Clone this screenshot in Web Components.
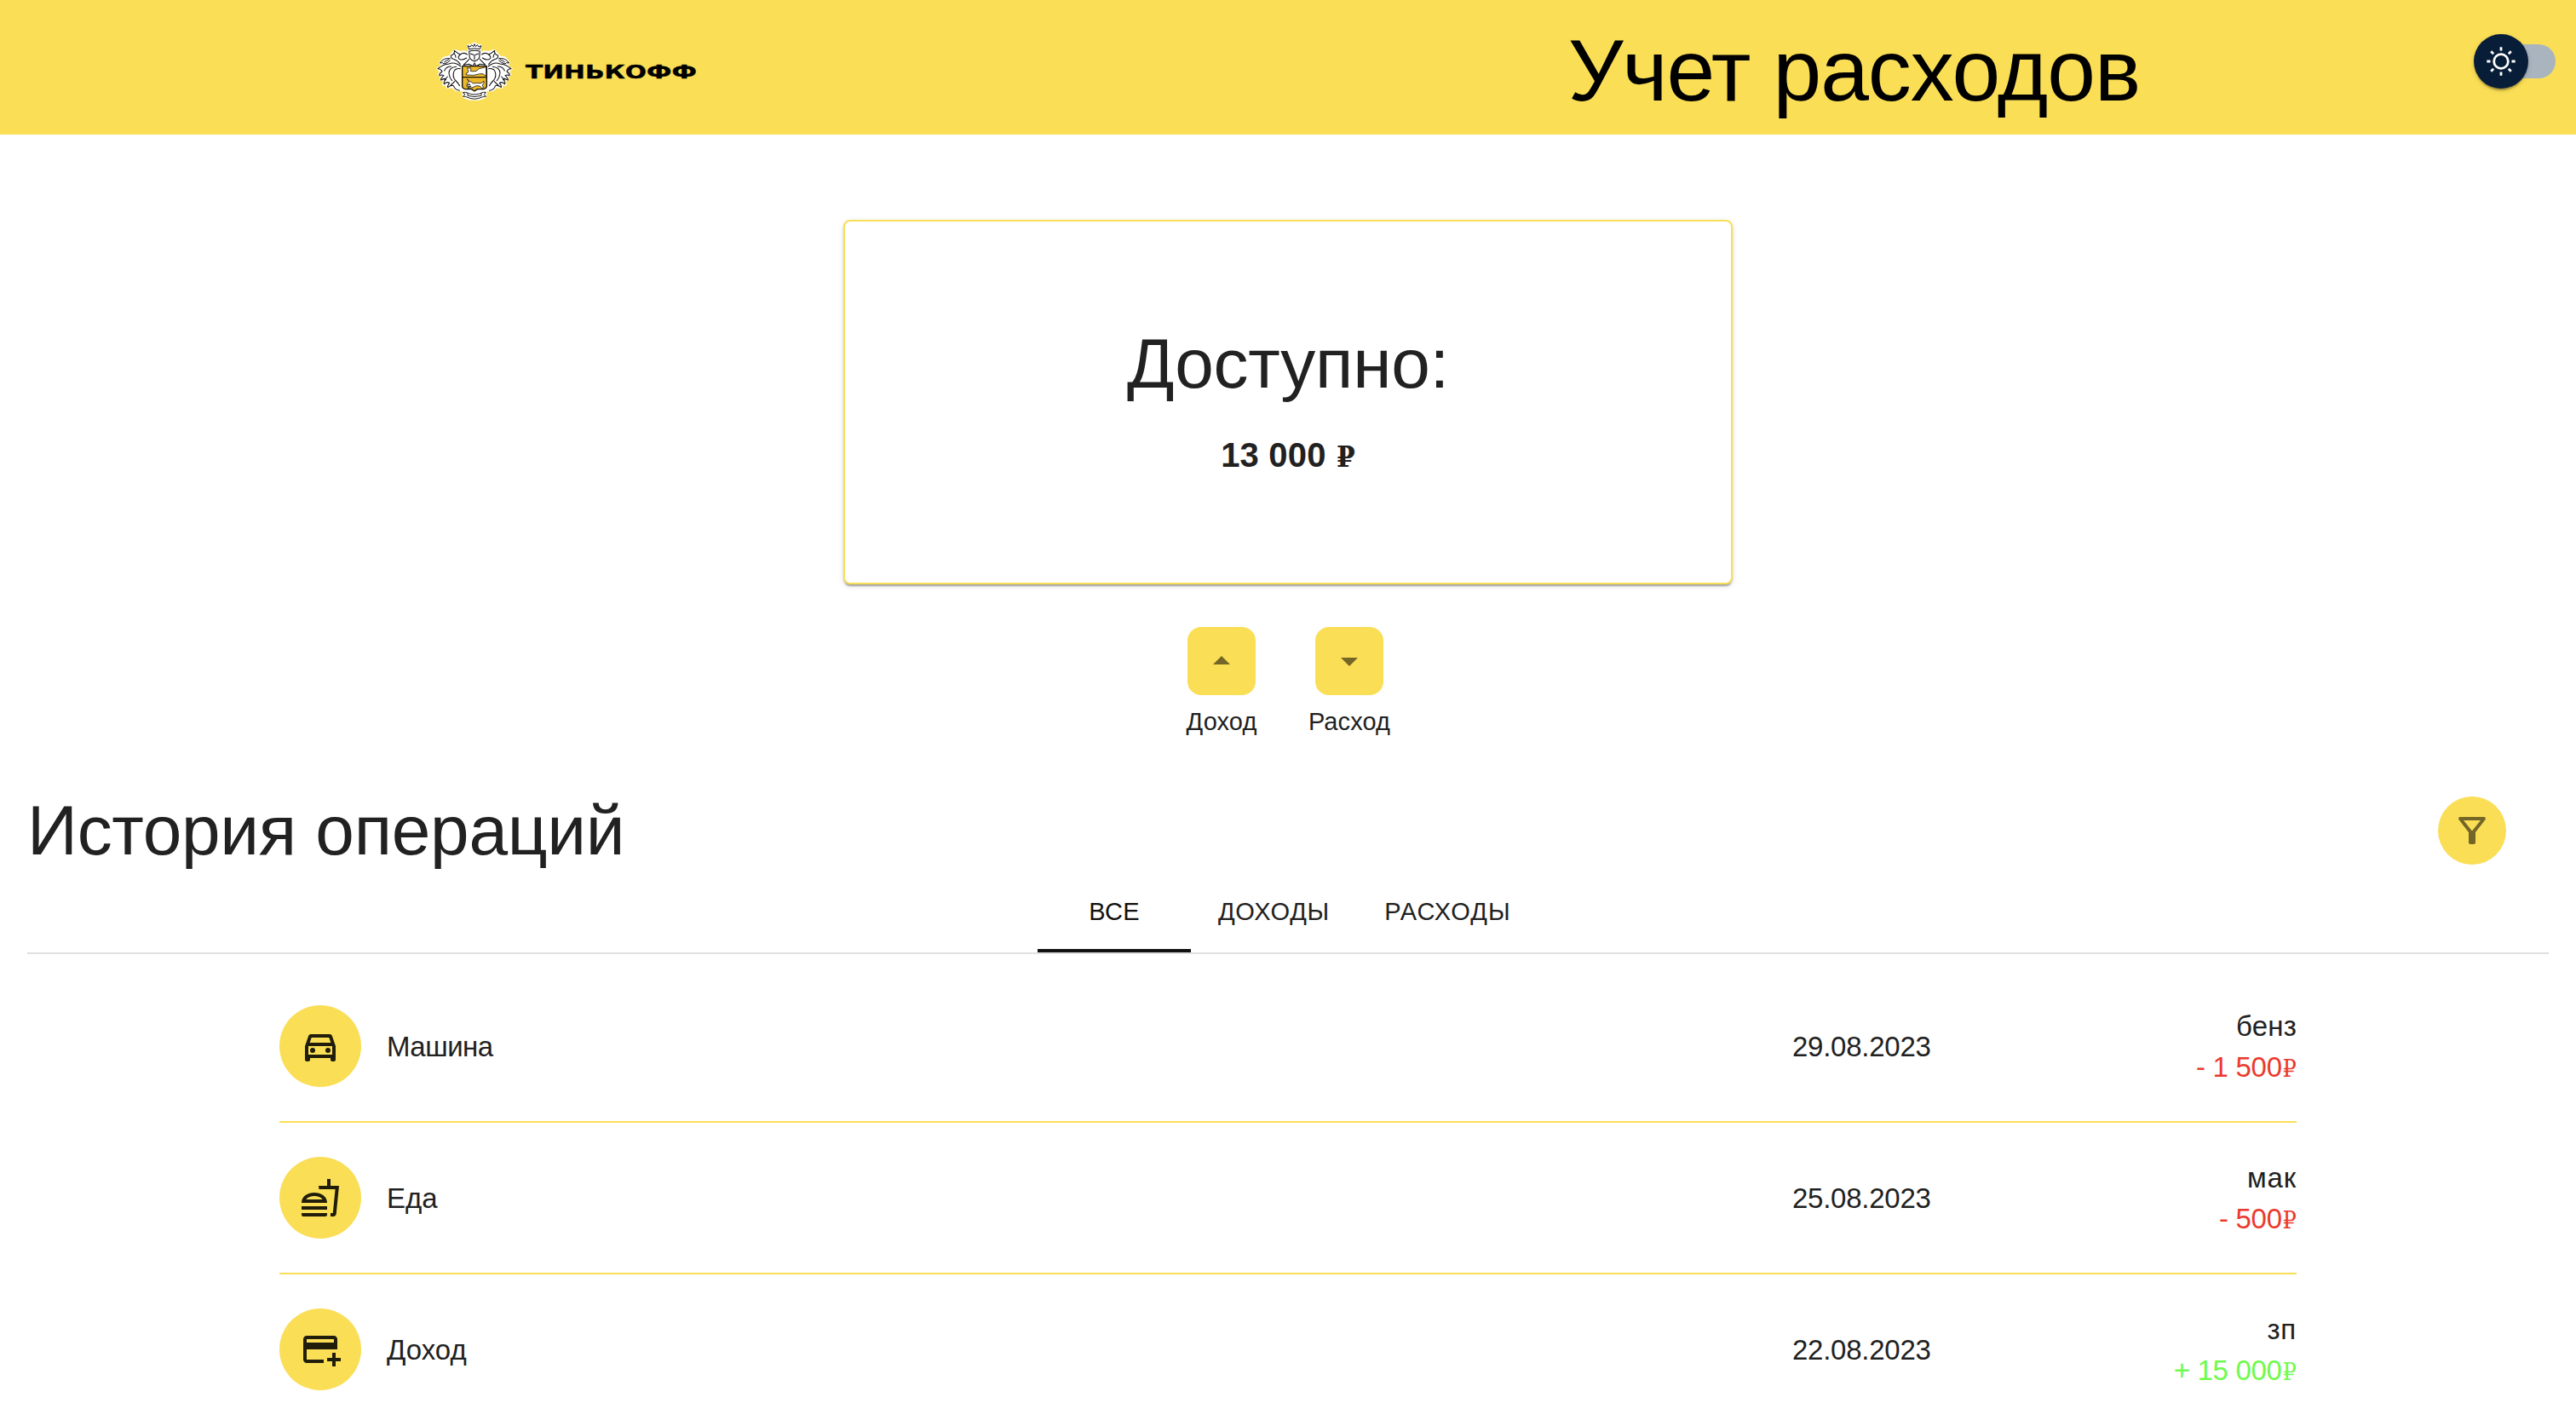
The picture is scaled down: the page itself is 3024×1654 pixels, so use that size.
<!DOCTYPE html>
<html lang="ru">
<head>
<meta charset="utf-8">
<title>Учет расходов</title>
<style>
  html, body { margin: 0; }
  body {
    --brand: #fade56;
    --text: #212121;
    background: #fff;
    color: var(--text);
    font-family: "Liberation Sans", Arial, sans-serif;
    overflow: hidden;
    height: 1654px;
  }
</style>
</head>
<body>
<expense-app></expense-app>
<script>
const define = (name, markup, setup) => {
  const template = document.createElement('template');
  template.innerHTML = markup;
  customElements.define(name, class extends HTMLElement {
    connectedCallback() {
      if (this.shadowRoot) return;
      const root = this.attachShadow({ mode: 'open' });
      root.append(template.content.cloneNode(true));
      if (setup) setup(this, root);
    }
  });
};

const ICONS = {
  up: '<path d="m7 14 5-5 5 5z"/>',
  down: '<path d="m7 10 5 5 5-5z"/>',
  filter: '<path d="M7 6h10l-5.01 6.3L7 6zm-2.75-.39C6.27 8.2 10 13 10 13v6c0 .55.45 1 1 1h2c.55 0 1-.45 1-1v-6s3.72-4.8 5.74-7.39c.51-.66.04-1.61-.79-1.61H5.04c-.83 0-1.3.95-.79 1.61z"/>',
  car: '<path d="M18.92 6.01C18.72 5.42 18.16 5 17.5 5h-11c-.66 0-1.21.42-1.42 1.01L3 12v8c0 .55.45 1 1 1h1c.55 0 1-.45 1-1v-1h12v1c0 .55.45 1 1 1h1c.55 0 1-.45 1-1v-8l-2.08-5.99zM6.85 7h10.29l1.04 3H5.81l1.04-3zM19 17H5v-5h14v5z"/><circle cx="7.5" cy="14.5" r="1.5"/><circle cx="16.5" cy="14.5" r="1.5"/>',
  food: '<path d="M1 21.98c0 .56.45 1.01 1.01 1.01H15c.56 0 1.01-.45 1.01-1.01V21H1v.98zM8.5 8.99C4.75 8.99 1 11 1 15h15c0-4-3.75-6.01-7.5-6.01zM3.62 13c1.11-1.55 3.47-2.01 4.88-2.01s3.77.46 4.88 2.01H3.62zM1 17h15v2H1zM18 5V1h-2v4h-5l.23 2h9.56l-1.4 14H18v2h1.72c.84 0 1.53-.65 1.63-1.47L23 5h-5z"/>',
  card: '<path d="M20 4H4c-1.11 0-1.99.89-1.99 2L2 18c0 1.11.89 2 2 2h10v-2H4v-6h18V6c0-1.11-.89-2-2-2zm0 4H4V6h16v2zm4 9v2h-3v3h-2v-3h-3v-2h3v-3h2v3h3z"/>'
};

define('ui-icon', `
<style>:host{display:block;width:48px;height:48px}svg{display:block;width:100%;height:100%;fill:currentColor}</style>
<svg viewBox="0 0 24 24"></svg>`, (el, root) => {
  root.querySelector('svg').innerHTML = ICONS[el.getAttribute('name')];
});

define('ruble-sign', `
<style>:host{display:inline-block;font-family:"DejaVu Serif",serif;font-size:.85em;line-height:1;letter-spacing:0;transform:scaleX(.92);transform-origin:100% 50%;margin-left:-.02em}</style>₽`);

define('brand-logo', `
<style>
  :host{display:flex;align-items:center;gap:14px}
  svg{display:block}
  .crest{width:92px;height:70px}
  .word{width:202px;height:24px;overflow:visible;margin-top:5px}
</style>
<svg class="crest" viewBox="34 55 276 210" fill="none" stroke-linecap="round" stroke-linejoin="round">
  <defs>
    <g id="leaf">
      <path fill="#fff" stroke="#fff" stroke-width="8" d="M128 138L150 130L155 98L138 90L122 92L102 86L92 98L84 108L64 112L50 130L60 134L50 146L42 150L54 160L46 170L56 178L54 188L66 192L62 206L80 204L76 216L96 214L108 226L130 226Z"/>
      <path stroke="#111" stroke-width="3.2" d="M149 101Q134 90 122 100Q113 96 101 86Q104 97 89 104Q88 114 101 117Q112 120 122 134M122 100Q110 110 119 116Q128 122 144 112M101 97Q107 104 106 110"/>
      <path stroke="#111" stroke-width="3" d="M86 114Q64 110 50 130Q62 126 64 133Q78 130 86 121M82 117L66 126"/>
      <path stroke="#111" stroke-width="3.2" d="M124 142Q102 124 82 133Q62 134 43 150Q54 150 58 160Q46 168 49 174Q58 170 64 174Q52 184 54 190Q66 182 72 187Q62 198 65 204Q76 194 84 200Q76 210 78 216Q92 206 98 210Q104 225 119 227M122 150Q103 148 99 162Q94 178 104 190Q114 200 120 210M108 143Q82 146 82 166Q84 182 93 192M90 142Q72 142 66 157M102 195Q92 205 86 211M77 178L66 190"/>
    </g>
  </defs>
  <use href="#leaf"/><use href="#leaf" transform="translate(344 0) scale(-1 1)"/>
  <path fill="#fff" stroke="#fff" stroke-width="6" d="M148 68L160 66L172 60L184 66L196 68L192 84L194 122L216 138V222L196 232L214 234L210 250L190 258H154L134 250L130 234L148 232L128 222V138L150 122L152 84Z"/>
  <path fill="#fff" stroke="#111" stroke-width="3" d="M153 81L148 69L157 73L162 66L168 72L172 63L176 72L182 66L187 73L196 69L191 81Q172 76 153 81Z"/>
  <path stroke="#111" stroke-width="3.2" d="M153 89Q172 82 191 89L189 112Q184 120 172 124Q160 120 155 112ZM158 97L168 101M186 97L176 101M172 101V117M153 117L133 137Q142 136 153 134L166 141L172 130L178 141L191 134Q202 136 211 137L191 117"/>
  <path fill="#edb92b" stroke="#111" stroke-width="4.2" d="M129 141H215V207Q216 220 204 222H182L172 229L162 222H140Q128 220 129 207Z"/>
  <path stroke="#111" stroke-width="3.4" d="M130 180H214"/>
  <path fill="#fff" stroke="#111" stroke-width="2.4" d="M144 166Q151 165 151 157Q144 151 148 145Q153 154 157 145Q162 151 158 158Q167 161 178 158L188 150L213 144V176Q202 165 192 168Q170 176 144 172Z"/>
  <path fill="#fff" stroke="#111" stroke-width="2.4" d="M147 187L155 195Q162 194 167 202Q178 199 193 201Q202 200 205 193Q208 204 199 208L205 216L198 218L190 211L178 210L166 216L148 218L160 211L146 214L144 209L157 206L154 204L147 207L145 202L152 197Z"/>
  <path fill="#fff" stroke="#111" stroke-width="2.8" d="M132 234Q140 231 148 235V245Q172 252 196 245V235Q204 231 212 234L206 241L212 248Q204 247 196 251Q172 262 148 251Q140 247 132 248L138 241ZM148 236Q172 246 196 236"/>
</svg>
<svg class="word" viewBox="0 0 202 24"><text x="0" y="18.4" font-family="DejaVu Sans, sans-serif" font-weight="700" font-size="22" textLength="201" lengthAdjust="spacingAndGlyphs" stroke="#000" stroke-width=".4">ТИНЬКОФФ</text></svg>`);

define('theme-switch', `
<style>
  :host{display:flex;position:relative;width:96px;height:64px;align-items:center;justify-content:flex-end}
  .track{width:80px;height:40px;border-radius:20px;background:#aab4be}
  .thumb{position:absolute;left:0;top:0;width:64px;height:64px;border-radius:50%;background:#081e38;display:grid;place-items:center;
    box-shadow:0 4px 2px -2px rgba(0,0,0,.2),0 2px 2px rgba(0,0,0,.14),0 2px 6px rgba(0,0,0,.12)}
  svg{width:40px;height:40px;fill:#fff}
</style>
<div class="track"></div>
<div class="thumb"><svg viewBox="0 0 20 20"><path d="M9.305 1.667V3.75h1.389V1.667h-1.39zm-4.707 1.95l-.982.982L5.09 6.072l.982-.982-1.473-1.473zm10.802 0L13.927 5.09l.982.982 1.473-1.473-.982-.982zM10 5.139a4.872 4.872 0 00-4.862 4.86A4.872 4.872 0 0010 14.862 4.872 4.872 0 0014.86 10 4.872 4.872 0 0010 5.139zm0 1.389A3.462 3.462 0 0113.471 10a3.462 3.462 0 01-3.473 3.472A3.462 3.462 0 016.527 10 3.462 3.462 0 0110 6.528zM1.665 9.305v1.39h2.083v-1.39H1.666zm14.583 0v1.39h2.084v-1.39h-2.084zM5.09 13.928L3.616 15.4l.982.982 1.473-1.473-.982-.982zm9.82 0l-.982.982 1.473 1.473.982-.982-1.473-1.473zM9.305 16.25v2.083h1.389V16.25h-1.39z"/></svg></div>`);

define('app-header', `
<style>
  :host{display:flex;align-items:center;box-sizing:border-box;height:158px;padding:0 24px 0 511px;background:var(--brand);color:#000}
  brand-logo{margin-top:9px}
  h1{margin:7px 392px 0 auto;font-weight:400;font-size:102px;line-height:120px;letter-spacing:-1.1px;white-space:nowrap}
  theme-switch{margin-bottom:14px}
</style>
<brand-logo></brand-logo>
<h1><slot></slot></h1>
<theme-switch></theme-switch>`);

define('balance-card', `
<style>
  :host{display:flex;flex-direction:column;align-items:center;gap:29px;box-sizing:border-box;width:1044px;height:428px;padding-top:120px;
    border:2px solid var(--brand);border-radius:8px;background:#fff;
    box-shadow:0 4px 2px -2px rgba(0,0,0,.2),0 2px 2px rgba(0,0,0,.14),0 2px 6px rgba(0,0,0,.12)}
  .title{font-size:82px;line-height:93px;letter-spacing:-.3px}
  .sum{font-size:40px;line-height:64px;font-weight:700;letter-spacing:.18px}
</style>
<div class="title"><slot name="title"></slot></div>
<div class="sum"><slot></slot></div>`);

define('action-button', `
<style>
  :host{display:flex;flex-direction:column;align-items:center;gap:11px;width:110px}
  button{all:unset;display:grid;place-items:center;width:80px;height:80px;border-radius:16px;background:var(--brand);color:rgba(0,0,0,.54)}
  span{font-size:29px;line-height:40px;letter-spacing:.1px}
</style>
<button></button><span><slot></slot></span>`, (el, root) => {
  const icon = document.createElement('ui-icon');
  icon.setAttribute('name', el.getAttribute('icon'));
  root.querySelector('button').append(icon);
});

define('filter-button', `
<style>:host{display:grid;place-items:center;width:80px;height:80px;border-radius:50%;background:var(--brand);color:rgba(0,0,0,.54)}</style>
<ui-icon name="filter"></ui-icon>`);

define('tab-item', `
<style>
  :host{display:flex;align-items:center;justify-content:center;box-sizing:border-box;height:96px;font-size:29px;border-bottom:4px solid transparent;padding-top:4px}
  :host([active]){border-color:#111;color:#111}
</style><slot></slot>`);

define('tab-bar', `
<style>:host{display:flex;justify-content:center;border-bottom:2px solid #e0e0e0}</style><slot></slot>`);

define('operation-row', `
<style>
  :host{display:grid;grid-template-columns:96px 1fr 296px 296px;align-items:center;box-sizing:border-box;height:178px;padding-bottom:2px;font-size:33px;line-height:48px}
  :host([divided]){border-bottom:2px solid var(--brand);padding-bottom:0}
  .avatar{display:grid;place-items:center;width:96px;height:96px;border-radius:50%;background:var(--brand);color:rgba(0,0,0,.87)}
  .name{padding:1px 0 0 30px}
  .date{padding-top:1px;letter-spacing:-.26px}
  .info{display:flex;flex-direction:column;align-items:flex-end;white-space:nowrap;padding-top:1px}
  .sum{color:#ea3a2d;letter-spacing:-.3px}
  :host([income]) .sum{color:#70fa4c}
</style>
<div class="avatar"></div>
<div class="name"><slot name="name"></slot></div>
<div class="date"><slot name="date"></slot></div>
<div class="info"><div><slot name="note"></slot></div><div class="sum"><slot></slot><ruble-sign></ruble-sign></div></div>`, (el, root) => {
  const icon = document.createElement('ui-icon');
  icon.setAttribute('name', el.getAttribute('icon'));
  root.querySelector('.avatar').append(icon);
});

define('expense-app', `
<style>
  :host{display:flex;flex-direction:column}
  .top{display:flex;flex-direction:column;align-items:center;padding-top:100px;gap:50px}
  .actions{display:flex;gap:40px;margin-right:6px}
  .history{padding:68px 32px 0}
  .bar{display:flex;align-items:center;justify-content:space-between;height:80px;padding-right:50px;margin-bottom:7px}
  h2{margin:0;font-weight:400;font-size:82px;line-height:80px;letter-spacing:-.3px}
  .list{width:80%;margin:20px auto 0}
</style>
<app-header>Учет расходов</app-header>
<section class="top">
  <balance-card><span slot="title">Доступно:</span>13 000 <ruble-sign></ruble-sign></balance-card>
  <div class="actions">
    <action-button icon="up">Доход</action-button>
    <action-button icon="down">Расход</action-button>
  </div>
</section>
<section class="history">
  <div class="bar"><h2>История операций</h2><filter-button></filter-button></div>
  <tab-bar>
    <tab-item active style="width:180px;letter-spacing:.3px">ВСЕ</tab-item>
    <tab-item style="width:195px;letter-spacing:.76px">ДОХОДЫ</tab-item>
    <tab-item style="width:213px;letter-spacing:1.1px">РАСХОДЫ</tab-item>
  </tab-bar>
  <div class="list">
    <operation-row icon="car" divided><span slot="name" style="letter-spacing:-.5px">Машина</span><span slot="date">29.08.2023</span><span slot="note" style="letter-spacing:.2px">бенз</span>- 1 500</operation-row>
    <operation-row icon="food" divided><span slot="name">Еда</span><span slot="date">25.08.2023</span><span slot="note" style="letter-spacing:.8px">мак</span>- 500</operation-row>
    <operation-row icon="card" income><span slot="name">Доход</span><span slot="date">22.08.2023</span><span slot="note" style="letter-spacing:.8px">зп</span>+ 15 000</operation-row>
  </div>
</section>`);
</script>
</body>
</html>
